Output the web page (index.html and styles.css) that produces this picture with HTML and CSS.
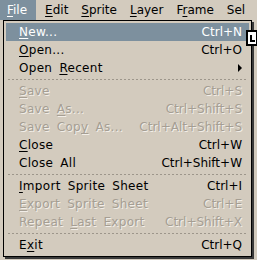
FILE: index.html
```html
<!DOCTYPE html>
<html lang="en">

<head>
    <meta charset="UTF-8">
    <meta name="viewport" content="width=device-width, initial-scale=1.0">
    <title>File menu</title>
    <link rel="stylesheet" href="styles.css">
</head>

<body>

    <div class="menubar">
        <span class="topItem open"><u>F</u>ile</span>
        <span class="topItem"><u>E</u>dit</span>
        <span class="topItem"><u>S</u>prite</span>
        <span class="topItem"><u>L</u>ayer</span>
        <span class="topItem">F<u>r</u>ame</span>
        <span class="topItem">Sel</span>
    </div>

    <div class="menu">
        <div class="item selected"><span class="label"><u>N</u>ew...</span><span>Ctrl+N</span></div>
        <div class="item"><span class="label"><u>O</u>pen...</span><span>Ctrl+O</span></div>
        <div class="item"><span class="label">Open <u>R</u>ecent</span><span class="arrow"></span></div>
        <div class="sep"></div>
        <div class="item off"><span class="label"><u>S</u>ave</span><span>Ctrl+S</span></div>
        <div class="item off"><span class="label">Save <u>A</u>s...</span><span>Ctrl+Shift+S</span></div>
        <div class="item off"><span class="label">Save Cop<u>y</u> As...</span><span>Ctrl+Alt+Shift+S</span></div>
        <div class="item"><span class="label"><u>C</u>lose</span><span>Ctrl+W</span></div>
        <div class="item"><span class="label">Close All</span><span>Ctrl+Shift+W</span></div>
        <div class="sep"></div>
        <div class="item"><span class="label"><u>I</u>mport Sprite Sheet</span><span>Ctrl+I</span></div>
        <div class="item off"><span class="label"><u>E</u>xport Sprite Sheet</span><span>Ctrl+E</span></div>
        <div class="item off"><span class="label">Repeat <u>L</u>ast Export</span><span>Ctrl+Shift+X</span></div>
        <div class="sep"></div>
        <div class="item"><span class="label">E<u>x</u>it</span><span>Ctrl+Q</span></div>

        <!-- mouse pointer sitting on the menu edge -->
        <svg class="pointer" width="12" height="16" viewBox="0 0 12 16">
            <rect x="0" y="0" width="12" height="16" fill="#000"/>
            <rect x="2" y="2" width="8" height="12" fill="#fff"/>
            <path d="M4 5h2v5h3v2h-5z" fill="#000"/>
        </svg>
    </div>

</body>

</html>
```

FILE: styles.css
```css
body {
    margin: 0;
    width: 257px;
    height: 260px;
    overflow: hidden;
    background-color: #d3cbbe;
    font-family: "DejaVu Sans", sans-serif;
    font-size: 12px;
    color: #000000;
}

u {
    text-underline-offset: 2px;
}

.menubar {
    display: flex;
    height: 20px;
    align-items: center;
    white-space: nowrap;
    overflow: hidden;
}

.topItem {
    padding: 0 6px 0 7px;
    line-height: 20px;
}

.topItem.open {
    background-color: #7d909e;
    color: #ffffff;
    padding: 0 9px 0 7px;
    margin-right: 2px;
}

.menu {
    position: relative;
    margin-left: 3px;
    width: 243px;
    border: 1px solid #000;
    box-shadow: 2px 2px 0 #3a3a3a;
    background-color: #d3cbbe;
    padding: 2px;
}

.item {
    display: flex;
    justify-content: space-between;
    align-items: center;
    height: 18px;
    padding: 0 7px 0 13px;
}

.label {
    letter-spacing: 0.3px;
    word-spacing: 3px;
}

.item.selected {
    background-color: #7d909e;
    color: #ffffff;
}

.item.off {
    color: #a59e93;
    text-shadow: 1px 1px 0 #f2eee8;
}

.sep {
    height: 5px;
    margin: 0 2px;
    background: linear-gradient(to right, #9d968b 50%, transparent 50%) 0 2px / 4px 1px repeat-x;
}

.arrow {
    width: 0;
    height: 0;
    border-top: 4px solid transparent;
    border-bottom: 4px solid transparent;
    border-left: 4px solid #000;
}

.pointer {
    position: absolute;
    right: -7px;
    top: 9px;
}
```
